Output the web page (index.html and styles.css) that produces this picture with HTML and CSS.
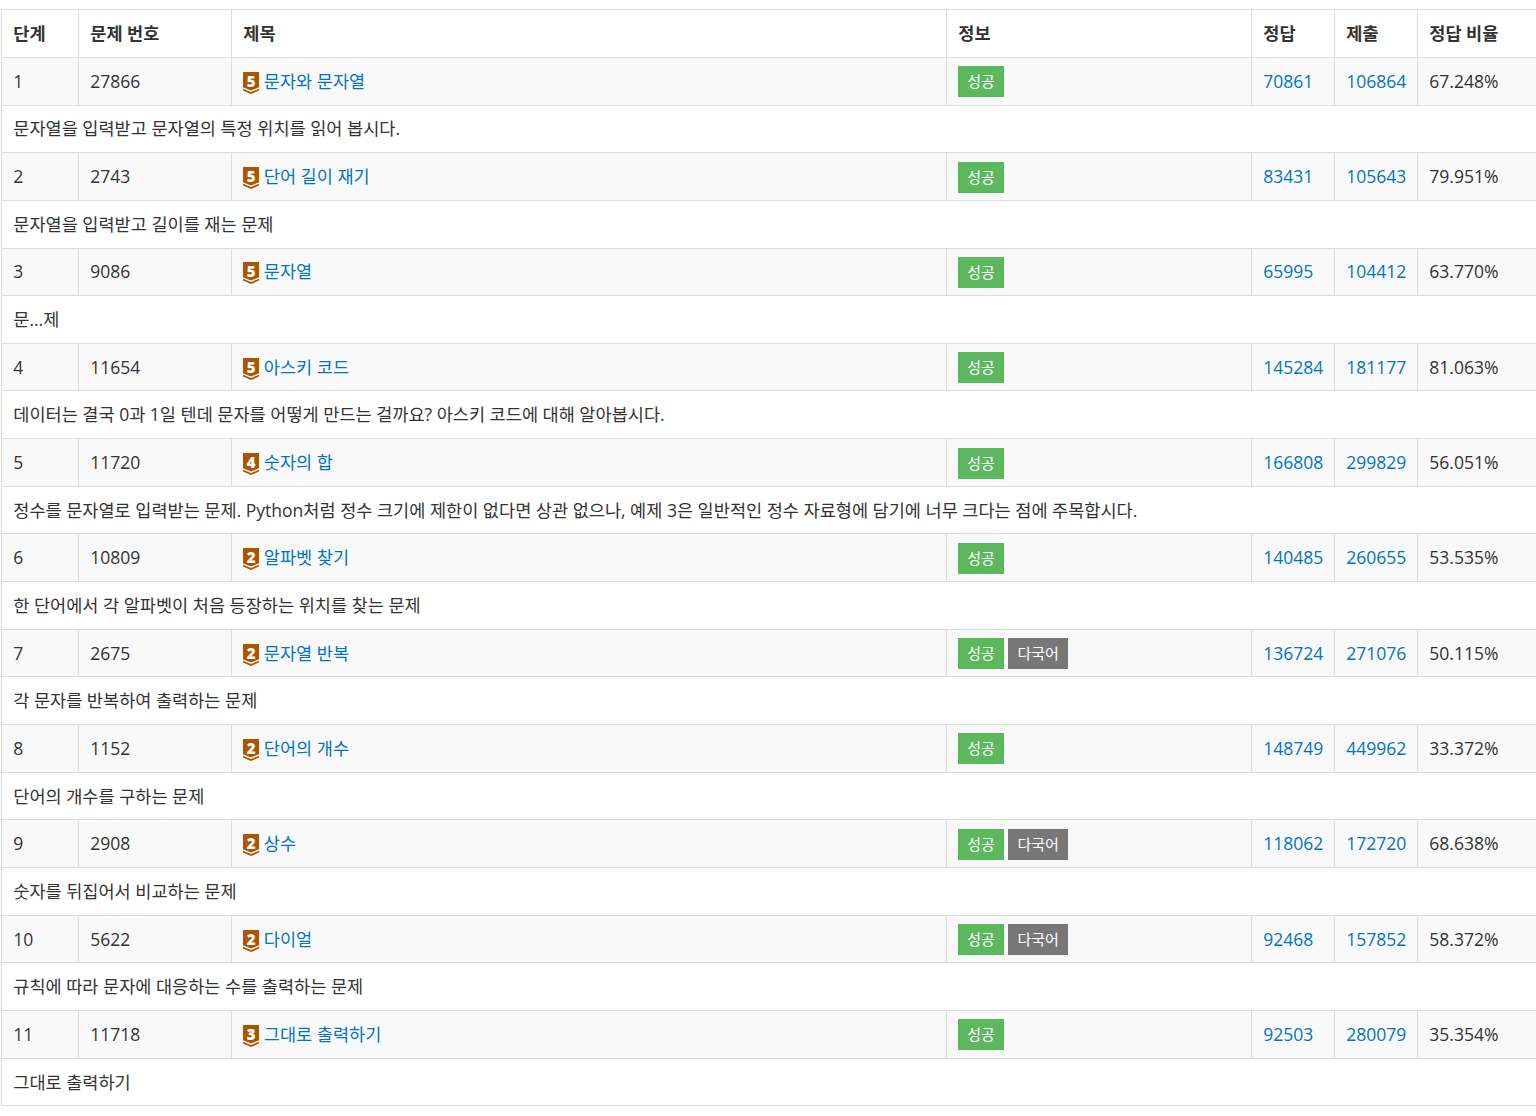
FILE: index.html
```html
<!DOCTYPE html>
<html lang="ko">
<head>
<meta charset="utf-8">
<title>문자열</title>
<link rel="stylesheet" href="styles.css">
</head>
<body>
<svg class="defs" width="0" height="0" aria-hidden="true"><defs>
<symbol id="tier" viewBox="0 0 16 22"><path class="tier-body" d="M0 0H16V15.2L8 18.6L0 15.2Z"/><path class="tier-body" d="M0 16.8L8 20L16 16.8V18.6L8 22L0 18.6Z"/></symbol>
</defs></svg>
<table class="problems">
<colgroup><col class="c1"><col class="c2"><col class="c3"><col class="c4"><col class="c5"><col class="c6"><col class="c7"></colgroup>
<thead><tr><th>단계</th><th>문제 번호</th><th>제목</th><th>정보</th><th>정답</th><th>제출</th><th>정답 비율</th></tr></thead>
<tbody>
<tr class="prob"><td>1</td><td>27866</td><td><span class="tier"><svg class="tier-ico"><use href="#tier"/></svg><b class="tier-num">5</b></span> <a href="#">문자와 문자열</a></td><td><span class="label ok">성공</span></td><td><a href="#">70861</a></td><td><a href="#">106864</a></td><td>67.248%</td></tr>
<tr><td colspan="7">문자열을 입력받고 문자열의 특정 위치를 읽어 봅시다.</td></tr>
<tr class="prob"><td>2</td><td>2743</td><td><span class="tier"><svg class="tier-ico"><use href="#tier"/></svg><b class="tier-num">5</b></span> <a href="#">단어 길이 재기</a></td><td><span class="label ok">성공</span></td><td><a href="#">83431</a></td><td><a href="#">105643</a></td><td>79.951%</td></tr>
<tr><td colspan="7">문자열을 입력받고 길이를 재는 문제</td></tr>
<tr class="prob"><td>3</td><td>9086</td><td><span class="tier"><svg class="tier-ico"><use href="#tier"/></svg><b class="tier-num">5</b></span> <a href="#">문자열</a></td><td><span class="label ok">성공</span></td><td><a href="#">65995</a></td><td><a href="#">104412</a></td><td>63.770%</td></tr>
<tr><td colspan="7">문...제</td></tr>
<tr class="prob"><td>4</td><td>11654</td><td><span class="tier"><svg class="tier-ico"><use href="#tier"/></svg><b class="tier-num">5</b></span> <a href="#">아스키 코드</a></td><td><span class="label ok">성공</span></td><td><a href="#">145284</a></td><td><a href="#">181177</a></td><td>81.063%</td></tr>
<tr><td colspan="7">데이터는 결국 0과 1일 텐데 문자를 어떻게 만드는 걸까요? 아스키 코드에 대해 알아봅시다.</td></tr>
<tr class="prob"><td>5</td><td>11720</td><td><span class="tier"><svg class="tier-ico"><use href="#tier"/></svg><b class="tier-num">4</b></span> <a href="#">숫자의 합</a></td><td><span class="label ok">성공</span></td><td><a href="#">166808</a></td><td><a href="#">299829</a></td><td>56.051%</td></tr>
<tr><td colspan="7">정수를 문자열로 입력받는 문제. Python처럼 정수 크기에 제한이 없다면 상관 없으나, 예제 3은 일반적인 정수 자료형에 담기에 너무 크다는 점에 주목합시다.</td></tr>
<tr class="prob"><td>6</td><td>10809</td><td><span class="tier"><svg class="tier-ico"><use href="#tier"/></svg><b class="tier-num">2</b></span> <a href="#">알파벳 찾기</a></td><td><span class="label ok">성공</span></td><td><a href="#">140485</a></td><td><a href="#">260655</a></td><td>53.535%</td></tr>
<tr><td colspan="7">한 단어에서 각 알파벳이 처음 등장하는 위치를 찾는 문제</td></tr>
<tr class="prob"><td>7</td><td>2675</td><td><span class="tier"><svg class="tier-ico"><use href="#tier"/></svg><b class="tier-num">2</b></span> <a href="#">문자열 반복</a></td><td><span class="label ok">성공</span> <span class="label multi">다국어</span></td><td><a href="#">136724</a></td><td><a href="#">271076</a></td><td>50.115%</td></tr>
<tr><td colspan="7">각 문자를 반복하여 출력하는 문제</td></tr>
<tr class="prob"><td>8</td><td>1152</td><td><span class="tier"><svg class="tier-ico"><use href="#tier"/></svg><b class="tier-num">2</b></span> <a href="#">단어의 개수</a></td><td><span class="label ok">성공</span></td><td><a href="#">148749</a></td><td><a href="#">449962</a></td><td>33.372%</td></tr>
<tr><td colspan="7">단어의 개수를 구하는 문제</td></tr>
<tr class="prob"><td>9</td><td>2908</td><td><span class="tier"><svg class="tier-ico"><use href="#tier"/></svg><b class="tier-num">2</b></span> <a href="#">상수</a></td><td><span class="label ok">성공</span> <span class="label multi">다국어</span></td><td><a href="#">118062</a></td><td><a href="#">172720</a></td><td>68.638%</td></tr>
<tr><td colspan="7">숫자를 뒤집어서 비교하는 문제</td></tr>
<tr class="prob"><td>10</td><td>5622</td><td><span class="tier"><svg class="tier-ico"><use href="#tier"/></svg><b class="tier-num">2</b></span> <a href="#">다이얼</a></td><td><span class="label ok">성공</span> <span class="label multi">다국어</span></td><td><a href="#">92468</a></td><td><a href="#">157852</a></td><td>58.372%</td></tr>
<tr><td colspan="7">규칙에 따라 문자에 대응하는 수를 출력하는 문제</td></tr>
<tr class="prob"><td>11</td><td>11718</td><td><span class="tier"><svg class="tier-ico"><use href="#tier"/></svg><b class="tier-num">3</b></span> <a href="#">그대로 출력하기</a></td><td><span class="label ok">성공</span></td><td><a href="#">92503</a></td><td><a href="#">280079</a></td><td>35.354%</td></tr>
<tr><td colspan="7">그대로 출력하기</td></tr>
</tbody>
</table>
</body>
</html>
```
FILE: styles.css
```css
html, body { margin: 0; padding: 0; background: #fff; overflow: hidden; height: 100%; }
body { padding: 9.24px 0 0 1px; box-sizing: border-box; font-family: "Open Sans", "Noto Sans CJK KR", sans-serif; font-size: 17.55px; line-height: 25px; color: #333; }
.defs { position: absolute; }
.problems { border-collapse: collapse; table-layout: fixed; width: 1545px; }
.c1 { width: 77px; } .c2 { width: 153px; } .c3 { width: 715px; } .c4 { width: 305px; } .c5 { width: 83px; } .c6 { width: 83px; } .c7 { width: 129px; }
.problems th, .problems td { border: 1px solid #ddd; padding: 10.83px 11.25px; text-align: left; vertical-align: top; white-space: nowrap; }
.problems th { font-weight: 700; }
.prob td { background: #f9f9f9; }
a { color: #0076c0; text-decoration: none; }
.tier { position: relative; display: inline-block; width: 16px; height: 22px; vertical-align: -4px; margin: -4px 0 -2px; }
.tier-ico { display: block; width: 16px; height: 22px; }
.tier-body { fill: #ad5600; }
.tier-num { position: absolute; left: 0; right: 0; top: -1px; text-align: center; font-family: "Open Sans", sans-serif; font-size: 15px; line-height: 20px; font-weight: 800; color: #fff; }
.label { display: inline-block; padding: 3px 9px 4px; font-size: 15px; line-height: 24px; height: 31px; box-sizing: border-box; color: #fff; vertical-align: top; margin: -2.45px 0 -6px; }
.ok { background: #5cb85c; }
.multi { background: #777; }
```
